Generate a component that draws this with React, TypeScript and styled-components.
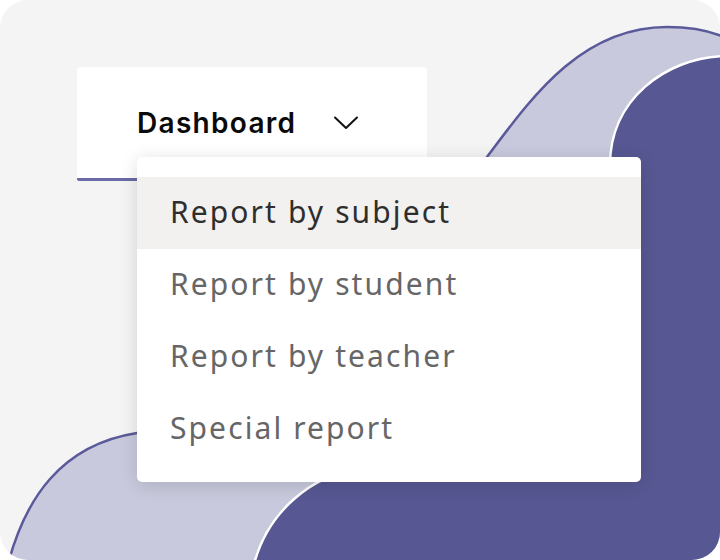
import React from "react";
import styled, { createGlobalStyle } from "styled-components";

const GlobalStyle = createGlobalStyle`
  html, body {
    margin: 0;
    padding: 0;
    background: #ffffff;
  }
`;

const Frame = styled.div`
  position: relative;
  width: 720px;
  height: 560px;
  background: #f4f4f4;
  border-radius: 28px;
  overflow: hidden;
  box-sizing: border-box;
  padding: 67px 0 0 77px;
`;

const Waves = styled.svg`
  position: absolute;
  inset: 0;
  z-index: 0;
`;

const Nav = styled.div`
  position: relative;
  z-index: 1;
  width: 350px;
`;

const Trigger = styled.button`
  display: flex;
  align-items: center;
  gap: 38px;
  width: 350px;
  height: 114px;
  padding: 0 0 0 60px;
  margin: 0;
  box-sizing: border-box;
  background: #ffffff;
  border: none;
  border-bottom: 3px solid #6a6aa6;
  border-radius: 4px 4px 2px 2px;
  font-family: Inter, "Liberation Sans", sans-serif;
  font-weight: 600;
  font-size: 28px;
  letter-spacing: 1.3px;
  color: #0a0a0a;
  cursor: pointer;
`;

const Menu = styled.ul`
  position: absolute;
  top: 90px;
  left: 60px;
  width: 504px;
  margin: 0;
  padding: 20px 0 17px;
  list-style: none;
  background: #ffffff;
  border-radius: 5px;
  box-shadow: 0 3px 18px rgba(0, 0, 0, 0.14);
`;

const Item = styled.li<{ $active?: boolean }>`
  display: flex;
  align-items: center;
  height: 72px;
  padding-left: 33px;
  background: ${(p) => (p.$active ? "#f2f1ef" : "transparent")};
  color: ${(p) => (p.$active ? "#2e2e2e" : "#666666")};
  font-family: "Noto Sans", "Open Sans", sans-serif;
  font-size: 30px;
  letter-spacing: 2.1px;
  padding-bottom: 3px;
  box-sizing: border-box;
`;

const Chevron = () => (
  <svg width="24" height="14" viewBox="0 0 24 14" fill="none">
    <path d="M1 1.5 L12 12 L23 1.5" stroke="#111" strokeWidth="2" strokeLinecap="round" strokeLinejoin="round" />
  </svg>
);

const items = ["Report by subject", "Report by student", "Report by teacher", "Special report"];

export default function App() {
  return (
    <>
      <GlobalStyle />
      <Frame>
        <Waves width="720" height="560" viewBox="0 0 720 560">
          <path
            d="M 8 564 C 25 500, 60 445, 137 433 C 250 415, 420 240, 487 157 C 530 100, 580 27, 667 27 C 690 27, 710 31, 724 37 L 724 564 Z"
            fill="#c8c9dc"
            stroke="#5a5a9a"
            strokeWidth="2.5"
          />
          <path
            d="M 724 56 C 665 58, 610 100, 610 165 C 610 330, 470 450, 360 468 C 310 476, 268 512, 254 564 L 724 564 Z"
            fill="#575893"
            stroke="#ffffff"
            strokeWidth="2.5"
          />
        </Waves>
        <Nav>
          <Trigger>
            Dashboard
            <Chevron />
          </Trigger>
          <Menu>
            {items.map((label, i) => (
              <Item key={label} $active={i === 0}>
                {label}
              </Item>
            ))}
          </Menu>
        </Nav>
      </Frame>
    </>
  );
}
